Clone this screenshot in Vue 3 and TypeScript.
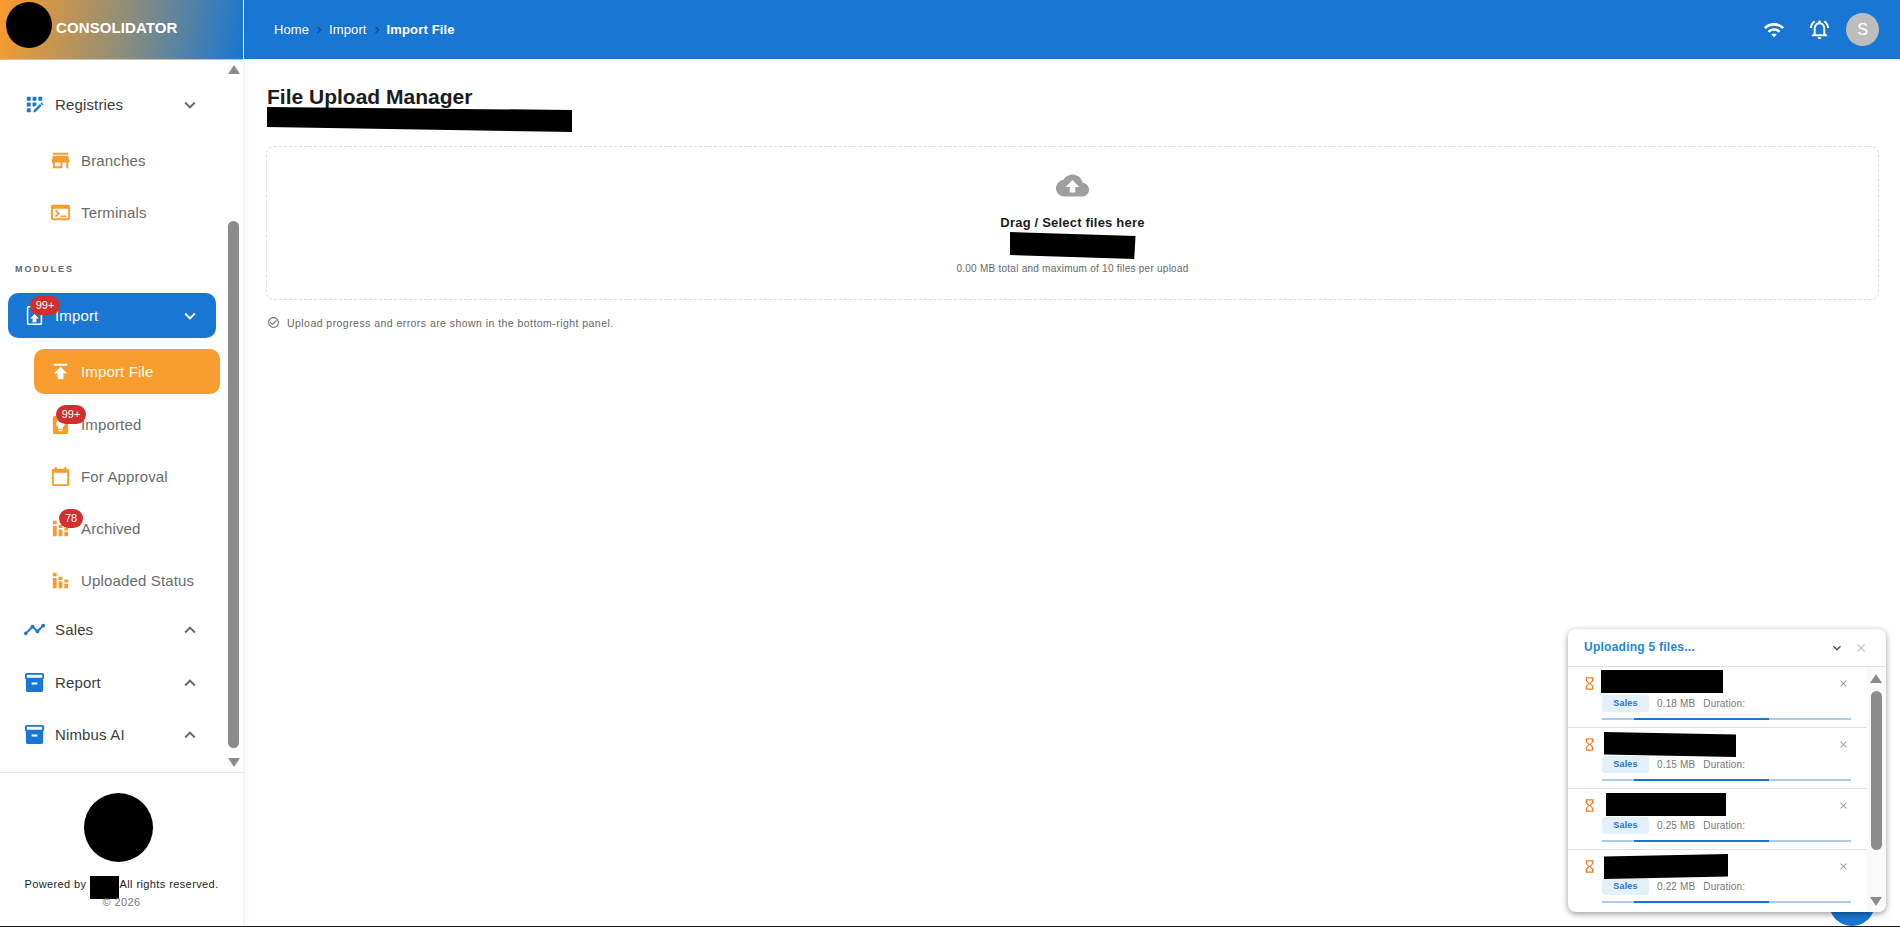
<script setup lang="ts">
interface NavItem {
  label: string
  icon: string
  badge?: string
  chevron?: 'up' | 'down'
  kind: 'top' | 'sub'
  state?: 'open' | 'current'
  gap: number
}

const icons: Record<string, string> = {
  registry:
    'M10 4h4v4h-4zM4 16h4v4H4zM4 10h4v4H4zM4 4h4v4H4zM16 4h4v4h-4zM14 12.42V10h-4v4h2.42zM20.88 11.29l-1.17-1.17c-.16-.16-.42-.16-.58 0l-.88.88L20 12.75l.88-.88c.16-.16.16-.42 0-.58zM11 18.25V20h1.75l6.67-6.67-1.75-1.75z',
  store: 'M20 4H4v2h16V4zm1 10v-2l-1-5H4l-1 5v2h1v6h10v-6h4v6h2v-6h1zm-9 4H6v-4h6v4z',
  terminal:
    'M20 4H4c-1.11 0-2 .9-2 2v12c0 1.1.89 2 2 2h16c1.1 0 2-.9 2-2V6c0-1.1-.9-2-2-2zm0 14H4V8h16v10zm-2-1h-6v-2h6v2zM7.5 17l-1.41-1.41L8.67 13l-2.59-2.59L7.5 9l4 4-4 4z',
  importBox:
    'M6 2h12a2 2 0 0 1 2 2v16a2 2 0 0 1-2 2H6a2 2 0 0 1-2-2V4a2 2 0 0 1 2-2zm0 1.600a.4.4 0 0 0-.4.4v16a.4.4 0 0 0 .4.4h12a.4.4 0 0 0 .4-.4V4a.4.4 0 0 0-.4-.4H6zM12 10.500l4.500 4.500H14v4h-4v-4H7.500z',
  publish: 'M5 4v2h14V4H5zm0 10h4v6h6v-6h4l-7-7-7 7z',
  bulb:
    'M6 3h12a2 2 0 0 1 2 2v15a2 2 0 0 1-2 2H6a2 2 0 0 1-2-2V5a2 2 0 0 1 2-2zm6 3.500a4.500 4.500 0 0 0-2.500 8.200V16.500h5v-1.800A4.500 4.500 0 0 0 12 6.500zm-2 11V19h4v-1.500z',
  calendar:
    'M19 4h-1V2h-2v2H8V2H6v2H5c-1.110 0-2 .9-2 2v14c0 1.100.89 2 2 2h14c1.100 0 2-.9 2-2V6c0-1.100-.9-2-2-2zm0 16H5V8h14v12z',
  bars: 'M4 4h4v3.500H4zM4 9.500h4V20H4zM10 8h4v3.500h-4zM10 13h4v7h-4zM16 11h4v3h-4zM16 15.500h4V20h-4z',
  timeline:
    'M23 8c0 1.100-.9 2-2 2-.18 0-.35-.02-.51-.07l-3.560 3.550c.05.16.07.34.07.52 0 1.100-.9 2-2 2s-2-.9-2-2c0-.18.02-.36.07-.52l-2.550-2.550c-.16.05-.34.07-.52.07s-.36-.02-.52-.07l-4.550 4.560c.05.16.07.33.07.51 0 1.100-.9 2-2 2s-2-.9-2-2 .9-2 2-2c.18 0 .35.02.51.07l4.560-4.550C8.020 9.360 8 9.180 8 9c0-1.100.9-2 2-2s2 .9 2 2c0 .18-.02.36-.07.52l2.550 2.550c.16-.05.34-.07.52-.07s.36.02.52.07l3.550-3.560C19.020 8.350 19 8.180 19 8c0-1.100.9-2 2-2s2 .9 2 2z',
  archive:
    'M20 2H4c-1 0-2 .9-2 2v3.010c0 .72.43 1.340 1 1.690V20c0 1.100 1.100 2 2 2h14c.9 0 2-.9 2-2V8.700c.57-.35 1-.97 1-1.690V4c0-1.100-1-2-2-2zm-5 12H9v-2h6v2zm5-7H4V4l16-.02V7z',
}

const chevronDown = 'M16.590 8.590L12 13.170 7.410 8.590 6 10l6 6 6-6z'
const chevronUp = 'M12 8l-6 6 1.410 1.410L12 10.830l4.590 4.580L18 14z'
const closeIcon =
  'M19 6.410L17.590 5 12 10.590 6.410 5 5 6.410 10.590 12 5 17.590 6.410 19 12 13.410 17.590 19 19 17.590 13.410 12z'
const hourglass =
  'M6 2v6h.01L6 8.010 10 12l-4 4 .01.01H6V22h12v-5.990h-.01L18 16l-4-4 4-3.990-.01-.01H18V2H6zm10 14.500V20H8v-3.500l4-4 4 4zm-4-5l-4-4V4h8v3.500l-4 4z'

const registryItems: NavItem[] = [
  { label: 'Registries', icon: 'registry', chevron: 'down', kind: 'top', gap: 0 },
  { label: 'Branches', icon: 'store', kind: 'sub', gap: 11 },
  { label: 'Terminals', icon: 'terminal', kind: 'sub', gap: 7 },
]

const moduleItems: NavItem[] = [
  { label: 'Import', icon: 'importBox', badge: '99+', chevron: 'down', kind: 'top', state: 'open', gap: 0 },
  { label: 'Import File', icon: 'publish', kind: 'sub', state: 'current', gap: 11 },
  { label: 'Imported', icon: 'bulb', badge: '99+', kind: 'sub', gap: 8 },
  { label: 'For Approval', icon: 'calendar', kind: 'sub', gap: 7 },
  { label: 'Archived', icon: 'bars', badge: '78', kind: 'sub', gap: 7 },
  { label: 'Uploaded Status', icon: 'bars', kind: 'sub', gap: 7 },
  { label: 'Sales', icon: 'timeline', chevron: 'up', kind: 'top', gap: 4 },
  { label: 'Report', icon: 'archive', chevron: 'up', kind: 'top', gap: 8 },
  { label: 'Nimbus AI', icon: 'archive', chevron: 'up', kind: 'top', gap: 7 },
]

const uploads = [
  { size: '0.18 MB', redact: 'redact-a' },
  { size: '0.15 MB', redact: 'redact-b' },
  { size: '0.25 MB', redact: 'redact-c' },
  { size: '0.22 MB', redact: 'redact-d' },
]
</script>

<template>
  <div class="app">
    <aside class="sidebar">
      <div class="brand">
        <span class="brand-logo"></span>
        <span class="brand-name">CONSOLIDATOR</span>
      </div>

      <div class="nav-wrap">
        <nav class="nav">
          <a
            v-for="item in registryItems"
            :key="item.label"
            class="nav-item"
            :class="[item.kind, item.state]"
            :style="{ marginTop: item.gap + 'px' }"
          >
            <span class="nav-icon">
              <svg viewBox="0 0 24 24"><path :d="icons[item.icon]" fill-rule="evenodd" /></svg>
              <span v-if="item.badge" class="badge">{{ item.badge }}</span>
            </span>
            <span class="nav-label">{{ item.label }}</span>
            <svg v-if="item.chevron" class="chevron" viewBox="0 0 24 24">
              <path :d="item.chevron === 'up' ? chevronUp : chevronDown" />
            </svg>
          </a>

          <div class="section-title">MODULES</div>

          <a
            v-for="item in moduleItems"
            :key="item.label"
            class="nav-item"
            :class="[item.kind, item.state]"
            :style="{ marginTop: item.gap + 'px' }"
          >
            <span class="nav-icon">
              <svg viewBox="0 0 24 24"><path :d="icons[item.icon]" fill-rule="evenodd" /></svg>
              <span v-if="item.badge" class="badge" :class="{ narrow: item.badge.length < 3 }">{{ item.badge }}</span>
            </span>
            <span class="nav-label">{{ item.label }}</span>
            <svg v-if="item.chevron" class="chevron" viewBox="0 0 24 24">
              <path :d="item.chevron === 'up' ? chevronUp : chevronDown" />
            </svg>
          </a>
        </nav>

        <div class="scrollbar side-scroll">
          <span class="arrow-up"></span>
          <span class="track"><span class="thumb side-thumb"></span></span>
          <span class="arrow-down"></span>
        </div>
      </div>

      <footer class="side-footer">
        <span class="footer-logo"></span>
        <p class="powered">
          Powered by <span class="redact-name"></span> All rights reserved.
        </p>
        <p class="copyright">© 2026</p>
      </footer>
    </aside>

    <div class="main">
      <header class="topbar">
        <ol class="crumbs">
          <li>Home</li>
          <li class="sep"><svg viewBox="0 0 10 10"><path d="M3.500 2l3 3-3 3" /></svg></li>
          <li>Import</li>
          <li class="sep"><svg viewBox="0 0 10 10"><path d="M3.500 2l3 3-3 3" /></svg></li>
          <li class="crumb-current">Import File</li>
        </ol>
        <div class="top-actions">
          <svg class="top-icon wifi" viewBox="0 0 24 24">
            <path d="M1 9l2 2c4.970-4.970 13.030-4.970 18 0l2-2C16.930 2.930 7.080 2.930 1 9zm8 8l3 3 3-3c-1.650-1.660-4.340-1.660-6 0zm-4-4l2 2c2.760-2.760 7.240-2.760 10 0l2-2C15.140 9.140 8.870 9.140 5 13z" />
          </svg>
          <svg class="top-icon bell" viewBox="0 0 24 24">
            <path d="M12 22c1.100 0 2-.9 2-2h-4c0 1.100.9 2 2 2zm6-6v-5c0-3.070-1.630-5.640-4.500-6.320V4c0-.83-.67-1.500-1.500-1.500s-1.500.67-1.500 1.500v.68C7.640 5.360 6 7.920 6 11v5l-2 2v1h16v-1l-2-2zm-2 1H8v-6c0-2.480 1.510-4.500 4-4.500s4 2.020 4 4.500v6zM7.580 4.080L6.150 2.650C3.750 4.480 2.170 7.300 2.030 10.500h2c.15-2.650 1.510-4.970 3.550-6.420zm12.390 6.420h2c-.15-3.200-1.730-6.020-4.120-7.850l-1.420 1.430c2.020 1.450 3.390 3.770 3.540 6.420z" />
          </svg>
          <span class="avatar">S</span>
        </div>
      </header>

      <main class="content">
        <h1 class="title">File Upload Manager</h1>
        <div class="redact-sub"></div>

        <section class="dropzone">
          <svg class="cloud" viewBox="0 0 24 24">
            <path d="M19.350 10.040C18.670 6.590 15.640 4 12 4 9.110 4 6.600 5.640 5.350 8.040 2.340 8.360 0 10.910 0 14c0 3.310 2.690 6 6 6h13c2.760 0 5-2.240 5-5 0-2.640-2.050-4.780-4.650-4.960zM14 13v4h-4v-4H7l5-5 5 5h-3z" />
          </svg>
          <div class="drop-title">Drag / Select files here</div>
          <div class="redact-drop"></div>
          <div class="drop-hint">0.00 MB total and maximum of 10 files per upload</div>
        </section>

        <div class="note">
          <svg class="note-icon" viewBox="0 0 24 24">
            <path d="M16.590 7.580L10 14.170l-3.590-3.580L5 12l5 5 8-8zM12 2C6.480 2 2 6.480 2 12s4.480 10 10 10 10-4.480 10-10S17.520 2 12 2zm0 18c-4.420 0-8-3.580-8-8s3.580-8 8-8 8 3.580 8 8-3.580 8-8 8z" />
          </svg>
          <span>Upload progress and errors are shown in the bottom-right panel.</span>
        </div>
      </main>
    </div>

    <span class="fab"></span>

    <section class="upload-panel">
      <header class="panel-head">
        <span class="panel-title">Uploading 5 files...</span>
        <svg class="panel-btn dark" viewBox="0 0 24 24"><path :d="chevronDown" /></svg>
        <svg class="panel-btn" viewBox="0 0 24 24"><path :d="closeIcon" /></svg>
      </header>
      <div class="panel-body">
        <ul class="upload-list">
          <li v-for="file in uploads" :key="file.size" class="upload-row">
            <svg class="hourglass" viewBox="0 0 24 24"><path :d="hourglass" /></svg>
            <div class="upload-info">
              <div class="upload-name" :class="file.redact"></div>
              <div class="upload-meta">
                <span class="chip">Sales</span>
                <span>{{ file.size }}</span>
                <span>Duration:</span>
              </div>
              <div class="progress"><span class="progress-bar"></span></div>
            </div>
            <svg class="row-close" viewBox="0 0 24 24"><path :d="closeIcon" /></svg>
          </li>
        </ul>
        <div class="scrollbar panel-scroll">
          <span class="arrow-up"></span>
          <span class="track"><span class="thumb panel-thumb"></span></span>
          <span class="arrow-down"></span>
        </div>
      </div>
    </section>
  </div>
</template>

<style scoped>
.app {
  display: flex;
  height: 927px;
  overflow: hidden;
  box-sizing: border-box;
  border-bottom: 1px solid #1c1c1c;
  font-family: "Liberation Sans", Arial, sans-serif;
  color: #1c1c1c;
  background: #fff;
  position: relative;
}

/* sidebar */
.sidebar {
  width: 243px;
  flex: none;
  display: flex;
  flex-direction: column;
  background: #fff;
  border-right: 1px solid #eef1f6;
}

.brand {
  height: 59px;
  flex: none;
  display: flex;
  align-items: center;
  padding-left: 6px;
  gap: 4px;
  background: linear-gradient(100deg, #f99c2c 0%, #8d8d7b 52%, #1976d2 100%);
  border-bottom: 1px solid #c9c2b4;
  margin-bottom: -1px;
}

.brand-logo {
  width: 46px;
  height: 46px;
  border-radius: 50%;
  background: #000;
  flex: none;
  margin-bottom: 9px;
}

.brand-name {
  color: #fff;
  font-size: 15px;
  font-weight: 700;
  letter-spacing: 0.1px;
  margin-bottom: 4px;
}

.nav-wrap {
  flex: 1;
  min-height: 0;
  display: flex;
}

.nav {
  flex: 1;
  min-width: 0;
  padding: 23px 0 0 8px;
}

.nav-item {
  display: flex;
  align-items: center;
  height: 45px;
  border-radius: 10px;
  font-size: 15px;
  letter-spacing: 0.15px;
  position: relative;
  color: #3c3c3c;
}

.nav-item.top {
  width: 208px;
  padding-left: 16px;
  box-sizing: border-box;
}

.nav-item.sub {
  width: 186px;
  margin-left: 26px;
  padding-left: 16px;
  box-sizing: border-box;
  color: #6b6b6b;
}

.nav-item.open {
  background: #1976d2;
  color: #fff;
}

.nav-item.current {
  background: #f99c2e;
  color: #fff;
}

.nav-icon {
  width: 20px;
  height: 20px;
  flex: none;
  position: relative;
  margin-right: 11px;
}

.nav-icon svg {
  width: 23px;
  height: 23px;
  display: block;
  margin: -1.5px;
  fill: #1976d2;
}

.sub .nav-icon svg {
  fill: #f99c2e;
}

.open .nav-icon svg,
.current .nav-icon svg {
  fill: #fff;
}

.nav-label {
  flex: 1;
}

.chevron {
  width: 22px;
  height: 22px;
  flex: none;
  fill: #666;
  margin-right: 15px;
}

.open .chevron {
  fill: #fff;
}

.badge {
  position: absolute;
  left: 21px;
  top: -10px;
  transform: translateX(-50%);
  width: 30px;
  height: 19px;
  border-radius: 10px;
  background: #d32f2f;
  color: #fff;
  font-size: 11px;
  letter-spacing: 0;
  line-height: 19px;
  text-align: center;
}

.badge.narrow {
  width: 24px;
}

.section-title {
  height: 14px;
  margin: 27px 0 17px 7px;
  font-size: 9px;
  line-height: 14px;
  font-weight: 700;
  letter-spacing: 2px;
  color: #666;
}

/* fake scrollbar */
.scrollbar {
  width: 15px;
  flex: none;
  display: flex;
  flex-direction: column;
  align-items: center;
}

.side-scroll {
  margin-right: 2px;
}

.arrow-up,
.arrow-down {
  width: 0;
  height: 0;
  flex: none;
  border-left: 6.5px solid transparent;
  border-right: 6.5px solid transparent;
}

.arrow-up {
  margin-top: 6px;
  border-bottom: 9px solid #8c8c8c;
}

.arrow-down {
  margin-bottom: 5px;
  border-top: 9px solid #8c8c8c;
}

.track {
  flex: 1;
  width: 11px;
  display: block;
}

.thumb {
  display: block;
  width: 11px;
  border-radius: 6px;
  background: #8c8c8c;
}

.side-thumb {
  height: 527px;
  margin-top: 147px;
}

.side-footer {
  height: 154px;
  flex: none;
  border-top: 1px solid #e8e8e8;
  display: flex;
  flex-direction: column;
  align-items: center;
  box-sizing: border-box;
  padding-top: 20px;
}

.footer-logo {
  width: 69px;
  height: 69px;
  border-radius: 50%;
  background: #000;
  margin-right: 7px;
  flex: none;
}

.powered {
  margin: 15px 0 0;
  height: 14px;
  font-size: 11px;
  line-height: 14px;
  letter-spacing: 0.4px;
  white-space: nowrap;
  display: flex;
  align-items: center;
}

.redact-name {
  width: 29px;
  height: 23px;
  background: #000;
  display: inline-block;
  margin: 7px 1px 0 3px;
}

.copyright {
  margin: 4px 0 0;
  font-size: 11px;
  line-height: 14px;
  letter-spacing: 0.4px;
  color: #777;
}

/* main */
.main {
  flex: 1;
  min-width: 0;
  display: flex;
  flex-direction: column;
}

.topbar {
  height: 59px;
  flex: none;
  background: #1976d2;
  display: flex;
  align-items: center;
  padding: 0 21px 0 30px;
  color: #fff;
}

.crumbs {
  list-style: none;
  display: flex;
  align-items: center;
  gap: 5px;
  margin: 0;
  padding: 0;
  font-size: 13px;
  letter-spacing: 0.1px;
  flex: 1;
}

.sep {
  width: 10px;
  height: 10px;
  line-height: 0;
}

.sep svg {
  width: 10px;
  height: 10px;
  fill: none;
  stroke: #0d4a8f;
  stroke-width: 1.2;
}

.crumb-current {
  font-weight: 700;
  letter-spacing: 0.15px;
  margin-top: -1px;
}

.top-actions {
  display: flex;
  align-items: center;
}

.top-icon {
  fill: #fff;
}

.wifi {
  width: 22px;
  height: 22px;
  margin-right: 23px;
}

.bell {
  width: 23px;
  height: 23px;
  margin-right: 15px;
}

.avatar {
  width: 33px;
  height: 33px;
  border-radius: 50%;
  background: #bdbdbd;
  color: #fff;
  font-size: 16px;
  line-height: 33px;
  text-align: center;
}

.content {
  flex: 1;
  padding: 26px 21px 0 22px;
  background: linear-gradient(90deg, #f6f8fb 0, #fff 6px);
}

.title {
  margin: 0 0 0 1px;
  font-size: 21px;
  line-height: 24px;
  font-weight: 700;
  color: #1c1c1c;
}

.redact-sub {
  width: 305px;
  height: 25px;
  margin: -2px 0 0 1px;
  background: #000;
  clip-path: polygon(0 0, 100% 12%, 100% 100%, 0 80%);
}

.dropzone {
  height: 154px;
  margin-top: 14px;
  box-sizing: border-box;
  border: 1px dashed #dcdcdc;
  border-radius: 8px;
  display: flex;
  flex-direction: column;
  align-items: center;
  padding-top: 22px;
}

.cloud {
  width: 33px;
  height: 33px;
  flex: none;
  fill: #9e9e9e;
}

.drop-title {
  margin-top: 13px;
  font-size: 13px;
  line-height: 16px;
  letter-spacing: 0.2px;
  font-weight: 700;
}

.redact-drop {
  width: 126px;
  height: 27px;
  margin-top: 1px;
  background: #000;
  clip-path: polygon(0 0, 100% 15%, 99% 100%, 0 85%);
}

.drop-hint {
  margin-top: 4px;
  font-size: 10px;
  line-height: 12px;
  letter-spacing: 0.25px;
  color: #666;
}

.note {
  display: flex;
  align-items: center;
  gap: 7px;
  margin: 16px 0 0 1px;
  font-size: 10.5px;
  letter-spacing: 0.45px;
  color: #666;
}

.note-icon {
  width: 13px;
  height: 13px;
  fill: #777;
}

/* upload panel */
.fab {
  position: absolute;
  left: 1829px;
  top: 880px;
  width: 46px;
  height: 46px;
  border-radius: 50%;
  background: #1976d2;
}

.upload-panel {
  position: absolute;
  left: 1568px;
  top: 629px;
  width: 318px;
  height: 283px;
  border-radius: 8px;
  background: #fff;
  box-shadow: 0 2px 6px rgba(0, 0, 0, 0.4);
  display: flex;
  flex-direction: column;
  overflow: hidden;
}

.panel-head {
  height: 38px;
  flex: none;
  box-sizing: border-box;
  border-bottom: 1px solid #e0e0e0;
  display: flex;
  align-items: center;
  padding: 0 18px 0 16px;
}

.panel-title {
  flex: 1;
  margin-bottom: 2px;
  font-size: 12px;
  font-weight: 700;
  color: #1b8ad6;
  letter-spacing: 0.25px;
}

.panel-btn {
  width: 14px;
  height: 14px;
  fill: #bdbdbd;
}

.panel-btn.dark {
  width: 16px;
  height: 16px;
  fill: #555;
  margin-right: 9px;
}

.panel-body {
  flex: 1;
  min-height: 0;
  display: flex;
}

.upload-list {
  flex: 1;
  min-width: 0;
  list-style: none;
  margin: 0;
  padding: 0;
}

.upload-row {
  height: 61px;
  box-sizing: border-box;
  border-bottom: 1px solid #dedede;
  display: flex;
  padding: 0 15px 0 14px;
  position: relative;
}

.upload-row:last-child {
  border-bottom: 0;
}

.hourglass {
  width: 15px;
  height: 15px;
  flex: none;
  margin-top: 9px;
  fill: #f57c20;
}

.upload-info {
  flex: 1;
  min-width: 0;
  margin-left: 5px;
}

.upload-name {
  background: #000;
}

.redact-a {
  width: 122px;
  height: 23px;
  margin: 3px 0 2px -1px;
}

.redact-b {
  width: 132px;
  height: 25px;
  margin: 4px 0 -1px 2px;
  clip-path: polygon(0 0, 100% 10%, 100% 100%, 0 90%);
}

.redact-c {
  width: 120px;
  height: 23px;
  margin: 4px 0 1px 4px;
}

.redact-d {
  width: 124px;
  height: 25px;
  margin: 4px 0 -1px 2px;
  clip-path: polygon(0 10%, 100% 0, 100% 90%, 0 100%);
}

.upload-meta {
  display: flex;
  align-items: center;
  height: 17px;
  font-size: 10px;
  letter-spacing: 0.15px;
  color: #777;
  gap: 8px;
}

.chip {
  width: 47px;
  height: 17px;
  border-radius: 3px;
  background: #e3f0fb;
  color: #2b74c4;
  font-size: 9px;
  font-weight: 700;
  line-height: 17px;
  text-align: center;
}

.progress {
  height: 2px;
  margin-top: 6px;
  background: #aecbec;
  position: relative;
}

.progress-bar {
  position: absolute;
  left: 32px;
  top: 0;
  bottom: 0;
  width: 135px;
  background: #1976d2;
}

.row-close {
  position: absolute;
  right: 17px;
  top: 11px;
  width: 11px;
  height: 11px;
  fill: #9e9e9e;
}

.panel-scroll {
  width: 20px;
  background: #fafafa;
}

.panel-scroll .arrow-up {
  margin-top: 7px;
}

.panel-scroll .arrow-down {
  margin-bottom: 6px;
}

.panel-thumb {
  height: 159px;
  margin-top: 8px;
}
</style>

<style>
html,
body {
  margin: 0;
  overflow: hidden;
}
</style>
